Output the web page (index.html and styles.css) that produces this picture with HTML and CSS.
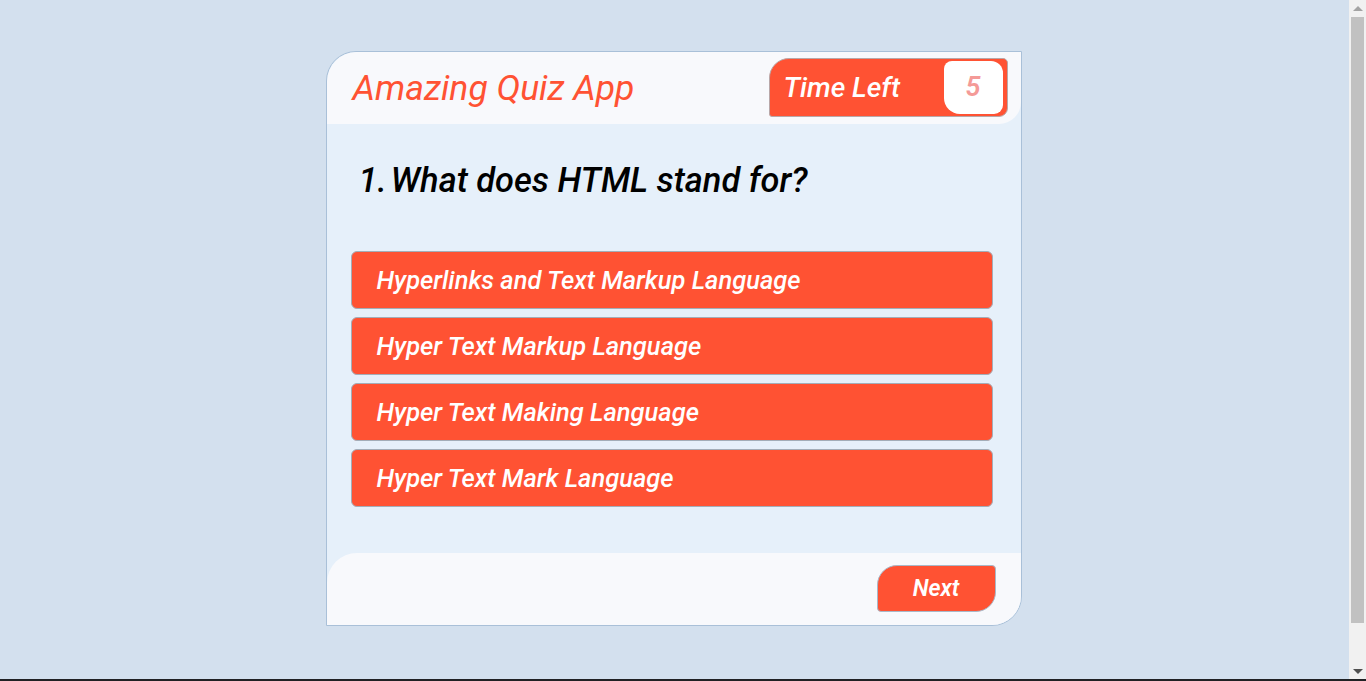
FILE: index.html
```html
<!DOCTYPE html>
<html lang="en">
<head>
<meta charset="utf-8">
<title>Amazing Quiz App</title>
<link rel="stylesheet" href="styles.css">
</head>
<body>
<div class="page">
  <div class="quiz">
    <header class="quiz-header">
      <h1 class="title">Amazing Quiz App</h1>
      <div class="timer">
        <span class="timer-label">Time Left</span>
        <span class="timer-value">5</span>
      </div>
    </header>
    <section class="quiz-body">
      <h2 class="question"><span class="q-num">1.</span>What does HTML stand for?</h2>
      <ul class="options">
        <li class="option">Hyperlinks and Text Markup Language</li>
        <li class="option">Hyper Text Markup Language</li>
        <li class="option">Hyper Text Making Language</li>
        <li class="option">Hyper Text Mark Language</li>
      </ul>
    </section>
    <footer class="quiz-footer">
      <button class="next-btn">Next</button>
    </footer>
  </div>
</div>
<div class="scrollbar">
  <span class="arrow arrow-up"></span>
  <span class="thumb"></span>
  <span class="arrow arrow-down"></span>
</div>
<div class="bottom-edge"></div>
</body>
</html>
```
FILE: styles.css
```css
html, body {
  margin: 0;
  padding: 0;
}
body {
  background: #d3e0ee;
  font-family: "Roboto", "Open Sans", sans-serif;
  font-style: italic;
  overflow: hidden;
}
.page {
  display: flex;
  justify-content: center;
  padding: 51px 19px 55px 0;
}
.quiz {
  width: 694px;
  height: 573px;
  background: #e6f0fa;
  border: 1px solid #a9c0d8;
  border-radius: 30px 0 30px 0;
  display: flex;
  flex-direction: column;
  overflow: hidden;
}
.quiz-header {
  height: 72px;
  flex: none;
  background: #f8f9fc;
  border-radius: 30px 0 22px 0;
  display: flex;
  align-items: flex-start;
  justify-content: space-between;
  padding: 0 13px 0 26px;
  box-sizing: border-box;
}
.title {
  margin: 0;
  font-size: 35.5px;
  font-weight: 400;
  color: #ff5233;
  line-height: 72px;
}
.timer {
  margin-top: 6px;
  width: 239px;
  height: 59px;
  box-sizing: border-box;
  background: #ff5233;
  border: 1px solid #b8a7a8;
  border-radius: 20px 5px 9px 3px;
  display: flex;
  align-items: center;
  justify-content: space-between;
  padding: 3px 4px 4px 14px;
}
.timer-label {
  color: #fff;
  font-size: 28px;
  font-weight: 500;
}
.timer-value {
  width: 59px;
  height: 53px;
  background: #fff;
  border-radius: 8px 12px 9px 16px;
  display: flex;
  align-items: center;
  justify-content: center;
  color: #f49a97;
  font-size: 27px;
  font-weight: 600;
}
.quiz-body {
  flex: 1;
  padding: 0 28px 0 24px;
}
.question {
  margin: 33px 0 0 8px;
  font-size: 34.4px;
  font-weight: 500;
  color: #000;
  line-height: 46px;
}
.q-num {
  margin-right: 4px;
}
.options {
  list-style: none;
  margin: 48px 0 0;
  padding: 0;
  display: flex;
  flex-direction: column;
  gap: 8px;
}
.option {
  height: 58px;
  box-sizing: border-box;
  background: #ff5233;
  border: 1px solid #a3adb8;
  border-radius: 6px;
  color: #fff;
  font-size: 25.5px;
  font-weight: 500;
  display: flex;
  align-items: center;
  padding-left: 25px;
}
.quiz-footer {
  height: 72px;
  flex: none;
  background: #f8f9fc;
  border-radius: 30px 0 0 0;
  display: flex;
  justify-content: flex-end;
  align-items: flex-start;
  padding: 12px 25px 0 0;
  box-sizing: border-box;
}
.next-btn {
  width: 119px;
  height: 47px;
  background: #ff5233;
  border: 1px solid #a9b8c8;
  border-radius: 20px 4px 20px 4px;
  color: #fff;
  font-family: inherit;
  font-style: italic;
  font-size: 23px;
  font-weight: 600;
  padding: 0;
}
.scrollbar {
  position: fixed;
  top: 0;
  right: 0;
  bottom: 0;
  width: 17px;
  background: #f1f1f1;
  display: flex;
  flex-direction: column;
  align-items: center;
}
.arrow {
  flex: none;
  width: 0;
  height: 0;
  border-left: 5px solid transparent;
  border-right: 5px solid transparent;
}
.arrow-up {
  margin: 6px 0 6px;
  border-bottom: 5px solid #a3a3a3;
}
.arrow-down {
  margin: 5px 0 7px;
  border-top: 5px solid #505050;
}
.thumb {
  width: 13px;
  height: 606px;
  background: #c1c1c1;
  margin-bottom: auto;
}
.bottom-edge {
  position: fixed;
  left: 0;
  right: 0;
  bottom: 0;
  height: 2px;
  background: #202124;
}
```
